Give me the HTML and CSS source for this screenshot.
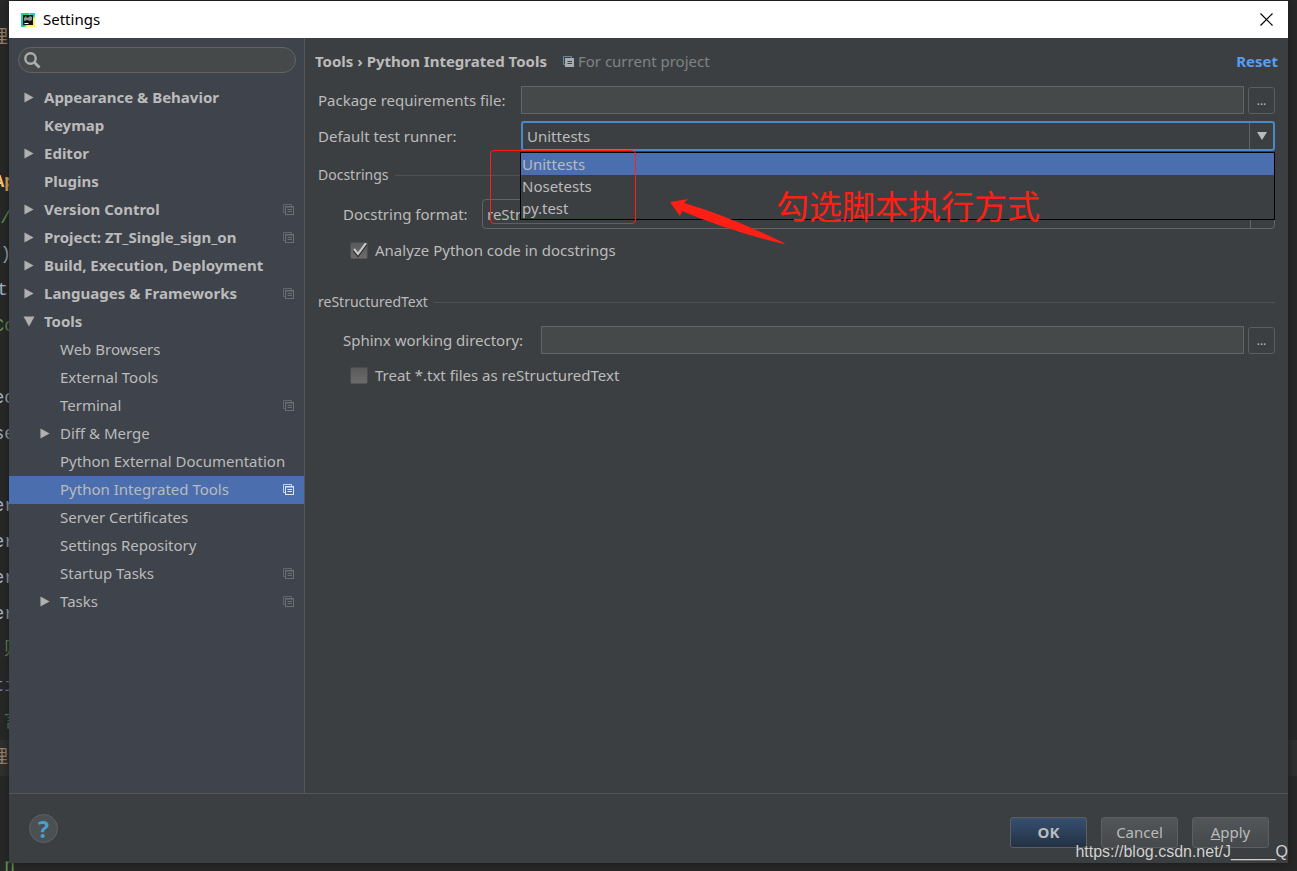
FILE: index.html
```html
<!DOCTYPE html>
<html lang="en">
<head>
<meta charset="utf-8">
<title>Settings</title>
<link rel="stylesheet" href="styles.css">
</head>
<body>
<svg class="defs" width="0" height="0" aria-hidden="true">
  <symbol id="copy" viewBox="0 0 11 11">
    <path d="M2 8.500H.5V.5H8.500V2" fill="none" stroke="var(--back)"/>
    <rect x="2.500" y="2.500" width="8" height="8" fill="var(--fill, none)" stroke="var(--front)"/>
    <path d="M3 3.500H10" stroke="var(--front)" opacity=".5"/>
    <path d="M4.500 5.500H9M4.500 7.500H9" stroke="var(--lines, var(--front))"/>
  </symbol>
  <symbol id="right" viewBox="0 0 10 12"><path d="M0 .5 10 6 0 11.500z" fill="currentColor"/></symbol>
  <symbol id="down" viewBox="0 0 12 10"><path d="M.5 0h11L6 10z" fill="currentColor"/></symbol>
</svg>

<div class="editor" aria-hidden="true">
  <div class="code"></div>
  <div class="code orange">理</div>
  <div class="code"></div>
  <div class="code"></div>
  <div class="code"></div>
  <div class="code gold">Ap</div>
  <div class="code green narrow">//</div>
  <div class="code narrow">()</div>
  <div class="code thin">t</div>
  <div class="code green">Co</div>
  <div class="code"></div>
  <div class="code">ec</div>
  <div class="code">se</div>
  <div class="code"></div>
  <div class="code">er</div>
  <div class="code">er</div>
  <div class="code">er</div>
  <div class="code">er</div>
  <div class="code green wide">则</div>
  <div class="code blue">ti</div>
  <div class="code green wide">言</div>
  <div class="code orange current">理</div>
  <div class="code"></div>
  <div class="code"></div>
  <div class="code green">n</div>
</div>

<div class="dialog" role="dialog" aria-labelledby="dialog-title">
  <header class="titlebar">
    <svg class="app-icon" viewBox="0 0 14 14" aria-hidden="true">
      <rect width="14" height="14" fill="#21d789"/>
      <path d="M8 0h5v3l1 2v9H3l6-4z" fill="#fcf84a"/>
      <path d="M8 0h5v5l-3-2z" fill="#30bdf0"/>
      <path d="M0 6l5 6-2 2H0z" fill="#18c6a0"/>
      <rect x="2" y="2" width="10" height="10" fill="#111"/>
      <path d="M3 8V5l2-2 1 2 2-1 1-1 2 1v3L9 8 6 7z" fill="#8b9690"/>
      <path d="M3.500 10.500h4" stroke="#fff"/>
    </svg>
    <h1 class="title" id="dialog-title">Settings</h1>
    <button class="close" type="button" aria-label="Close">
      <svg width="13" height="13" viewBox="0 0 13 13"><path d="M.5.5l12 12M12.500.5l-12 12" stroke="#000" stroke-width="1.200"/></svg>
    </button>
  </header>

  <div class="content">
    <nav class="sidebar" aria-label="Settings sections">
      <div class="search">
        <svg width="17" height="17" viewBox="0 0 17 17" aria-hidden="true"><circle cx="6.500" cy="6.500" r="5.200" fill="none" stroke="#adadad" stroke-width="2.400"/><path d="M10.500 10.500l5 5" stroke="#adadad" stroke-width="2.800"/></svg>
        <input class="search-input" type="text" aria-label="Search settings">
      </div>
      <ul class="tree">
        <li class="item top"><svg class="arrow"><use href="#right"/></svg><span class="name">Appearance &amp; Behavior</span></li>
        <li class="item top"><span class="arrow"></span><span class="name">Keymap</span></li>
        <li class="item top"><svg class="arrow"><use href="#right"/></svg><span class="name">Editor</span></li>
        <li class="item top"><span class="arrow"></span><span class="name">Plugins</span></li>
        <li class="item top"><svg class="arrow"><use href="#right"/></svg><span class="name">Version Control</span><svg class="copy"><use href="#copy"/></svg></li>
        <li class="item top"><svg class="arrow"><use href="#right"/></svg><span class="name">Project: ZT_Single_sign_on</span><svg class="copy"><use href="#copy"/></svg></li>
        <li class="item top"><svg class="arrow"><use href="#right"/></svg><span class="name">Build, Execution, Deployment</span></li>
        <li class="item top"><svg class="arrow"><use href="#right"/></svg><span class="name">Languages &amp; Frameworks</span><svg class="copy"><use href="#copy"/></svg></li>
        <li class="item top"><svg class="arrow"><use href="#down"/></svg><span class="name">Tools</span></li>
        <li class="item sub"><span class="arrow"></span><span class="name">Web Browsers</span></li>
        <li class="item sub"><span class="arrow"></span><span class="name">External Tools</span></li>
        <li class="item sub"><span class="arrow"></span><span class="name">Terminal</span><svg class="copy"><use href="#copy"/></svg></li>
        <li class="item sub"><svg class="arrow"><use href="#right"/></svg><span class="name">Diff &amp; Merge</span></li>
        <li class="item sub"><span class="arrow"></span><span class="name">Python External Documentation</span></li>
        <li class="item sub selected" aria-current="page"><span class="arrow"></span><span class="name">Python Integrated Tools</span><svg class="copy"><use href="#copy"/></svg></li>
        <li class="item sub"><span class="arrow"></span><span class="name">Server Certificates</span></li>
        <li class="item sub"><span class="arrow"></span><span class="name">Settings Repository</span></li>
        <li class="item sub"><span class="arrow"></span><span class="name">Startup Tasks</span><svg class="copy"><use href="#copy"/></svg></li>
        <li class="item sub"><svg class="arrow"><use href="#right"/></svg><span class="name">Tasks</span><svg class="copy"><use href="#copy"/></svg></li>
      </ul>
    </nav>

    <main class="pane">
      <div class="pane-head">
        <h2 class="crumbs">Tools › Python Integrated Tools</h2>
        <svg class="copy scope-icon" aria-hidden="true"><use href="#copy"/></svg>
        <span class="scope">For current project</span>
        <a class="reset" href="#">Reset</a>
      </div>

      <form class="form">
        <div class="row">
          <label class="label wide" for="req">Package requirements file:</label>
          <input class="field" id="req" type="text">
          <button class="browse" type="button" aria-label="Browse">...</button>
        </div>
        <div class="row runner-row">
          <label class="label wide" for="runner">Default test runner:</label>
          <div class="combo focused">
            <select class="select" id="runner"><option>Unittests</option><option>Nosetests</option><option>py.test</option></select>
            <span class="combo-button"><svg width="10" height="8" viewBox="0 0 10 8"><path d="M0 0h10L5 8z" fill="#bbb"/></svg></span>
            <ul class="popup" role="listbox" aria-label="Default test runner">
              <li class="option chosen" role="option" aria-selected="true">Unittests</li>
              <li class="option" role="option">Nosetests</li>
              <li class="option" role="option">py.test</li>
            </ul>
          </div>
        </div>

        <h3 class="section">Docstrings</h3>
        <div class="row inset">
          <label class="label format" for="format">Docstring format:</label>
          <div class="combo">
            <select class="select" id="format"><option>reStructuredText</option></select>
            <span class="combo-button"></span>
          </div>
        </div>
        <label class="check"><input class="box" type="checkbox" checked>Analyze Python code in docstrings</label>

        <h3 class="section spaced">reStructuredText</h3>
        <div class="row inset sphinx">
          <label class="label dir" for="sphinx">Sphinx working directory:</label>
          <input class="field" id="sphinx" type="text">
          <button class="browse" type="button" aria-label="Browse">...</button>
        </div>
        <label class="check"><input class="box" type="checkbox">Treat *.txt files as reStructuredText</label>
      </form>

      <div class="mark-box"></div>
      <svg class="mark-arrow" width="116" height="48" viewBox="0 0 116 48" aria-hidden="true"><path d="M1 3 19 0 15 4 Q60 17 116 44.500L115 45Q60 32 13 12L11 17z" fill="#ff1f14"/></svg>
      <p class="mark-text" lang="zh">勾选脚本执行方式</p>
    </main>
  </div>

  <footer class="footer">
    <button class="help" type="button" aria-label="Help">?</button>
    <button class="btn primary" type="button">OK</button>
    <button class="btn" type="button">Cancel</button>
    <button class="btn" type="button"><u>A</u>pply</button>
  </footer>
  <p class="watermark">https://blog.csdn.net/J_____Q</p>
</div>
</body>
</html>
```

FILE: styles.css
```css
* { box-sizing: border-box; }

body {
  margin: 0;
  min-height: 100vh;
  padding: 1px 9px 8px;
  display: flex;
  position: relative;
  overflow: hidden;
  background: #282828;
  color: #bbb;
  font: 15px/20px "Noto Sans", "Open Sans", "Noto Sans CJK SC", sans-serif;
}

button, input, select { font: inherit; color: inherit; margin: 0; }
h1, h2, h3, p, ul { margin: 0; padding: 0; font: inherit; list-style: none; }
.defs { position: absolute; }

/* Editor visible behind the dialog */
.editor {
  position: absolute;
  inset: 0;
  margin-top: -16px;
  font: 18px/36px "Liberation Mono", "Noto Sans CJK SC", monospace;
  color: #a9b7c6;
}
.code { height: 36px; width: 15px; display: flex; justify-content: flex-end; white-space: nowrap; }
.code.orange { width: 8px; color: #a08468; }
.code.thin { width: 8px; }
.code.narrow { width: 11px; }
.code.wide { width: 22px; }
.code.gold { color: #ffc66d; font-weight: bold; }
.code.green { color: #629755; }
.code.blue { color: #8888c6; }
.code.current { width: 100%; padding-right: calc(100% - 8px); background: #303030; }

.dialog {
  flex: 1;
  min-width: 0;
  display: flex;
  flex-direction: column;
  position: relative;
  background: #3c3f41;
  box-shadow: 0 0 8px #1a1a1a;
}

.titlebar {
  height: 37px;
  display: flex;
  align-items: center;
  gap: 8px;
  padding: 0 15px 0 12px;
  background: #fff;
  color: #000;
}
.app-icon { width: 14px; height: 14px; }
.title { flex: 1; padding-bottom: 1px; }
.close { padding: 0; border: 0; background: none; display: flex; }

.content { flex: 1; display: flex; }

.sidebar {
  width: 296px;
  padding-top: 9px;
  background: #3f434b;
  border-right: 1px solid #555;
}
.search {
  height: 26px;
  margin: 0 8px 11px 9px;
  padding-left: 5px;
  display: flex;
  align-items: center;
  border: 1px solid #646464;
  border-radius: 13px;
  background: #45494a;
}
.search-input { flex: 1; min-width: 0; border: 0; background: none; outline: 0; }

.item {
  height: 28px;
  display: flex;
  align-items: center;
  gap: 8px;
  padding: 0 10px 2px 14px;
  white-space: nowrap;
  --back: #5f6770;
  --front: #6b6f74;
}
.item.top { font-weight: bold; }
.item.sub { padding-left: 30px; }
.item.selected { background: #4b6eaf; --back: #b4d8ef; --front: #e0e4ea; }
.arrow { width: 12px; height: 11px; flex: none; color: #b0b0b0; }
.item .name { flex: 1; padding-left: 1px; }
.copy { width: 11px; height: 11px; flex: none; }

.pane { flex: 1; min-width: 0; position: relative; }
.pane-head {
  height: 48px;
  padding: 0 10px 2px;
  display: flex;
  align-items: center;
}
.crumbs { font-weight: bold; }
.scope-icon { margin: 0 4px 0 16px; --back: #5d8ca5; --front: #a8acae; --fill: #a8acae; --lines: #3c3f41; }
.scope { flex: 1; color: #808385; }
.reset { color: #589df6; font-weight: bold; text-decoration: none; }

.form { padding: 0 13px; }
.row { display: flex; align-items: center; }
.row.inset { padding-left: 25px; }
.label { flex: none; }
.label.wide { width: 203px; }
.label.format { width: 139px; }
.label.dir { width: 198px; }
.field {
  flex: 1;
  min-width: 0;
  height: 28px;
  padding: 0 6px;
  border: 1px solid #646464;
  background: #45494a;
  outline: 0;
}
.browse {
  width: 27px;
  height: 27px;
  margin: 1px 0 0 4px;
  padding: 0;
  border: 1px solid #5c5f60;
  border-radius: 3px;
  background: none;
  font-size: 12px;
}
.runner-row { padding-top: 7px; }
.combo { flex: 1; display: flex; position: relative; height: 30px; border: 1px solid #646464; border-radius: 4px; }
.combo.focused { border: 2px solid #4a88c7; border-radius: 3px; }
.select { flex: 1; min-width: 0; appearance: none; border: 0; padding: 0 4px; background: none; outline: 0; }
.combo-button {
  width: 24px;
  margin-left: -1px;
  display: flex;
  align-items: center;
  justify-content: center;
  border-left: 1px solid #646464;
  pointer-events: none;
}
.popup {
  position: absolute;
  z-index: 1;
  top: 29px;
  left: -3px;
  right: -2px;
  border: 1px solid #000;
  background: #3c3f41;
}
.option { height: 22px; line-height: 22px; padding-left: 1px; }
.option.chosen { background: #4b6eaf; }

.section { display: flex; align-items: center; gap: 6px; height: 48px; font-size: 14px; }
.section::after { content: ""; flex: 1; height: 1px; background: #515151; }
.section.spaced { height: 24px; margin-top: 24px; }
.sphinx { margin: 12px 0 5px; }

.check { display: flex; align-items: center; gap: 7px; height: 32px; margin: 5px 0 0 32px; }
.box {
  appearance: none;
  width: 18px;
  height: 17px;
  border: 1px solid #4a4c4d;
  border-bottom-color: #555;
  border-radius: 2px;
  background: linear-gradient(#5a5a5a, #6b6b6b);
}
.box:checked {
  background: url("data:image/svg+xml,%3Csvg xmlns='http://www.w3.org/2000/svg' viewBox='0 0 16 15'%3E%3Cpath d='M3 7l4 5L15 1' fill='none' stroke='%23222' stroke-width='3'/%3E%3Cpath d='M3 6l4 5L15 0' fill='none' stroke='%23c8c8c8' stroke-width='2.200'/%3E%3C/svg%3E"), linear-gradient(#5a5a5a, #6b6b6b);
}

/* Red annotations laid over the pane */
.mark-box {
  position: absolute;
  z-index: 2;
  left: 185px;
  top: 112px;
  width: 146px;
  height: 74px;
  border: 1px solid #ff1f14;
  border-radius: 4px;
}
.mark-arrow { position: absolute; z-index: 2; left: 364px; top: 161px; }
.mark-text {
  position: absolute;
  z-index: 2;
  left: 471px;
  top: 147px;
  font: 33px/40px "Noto Sans CJK SC", sans-serif;
  color: #ff1f14;
}

.footer {
  display: flex;
  align-items: center;
  gap: 14px;
  height: 70px;
  padding: 7px 19px 0 20px;
  border-top: 1px solid #555;
}
.help {
  width: 29px;
  height: 29px;
  margin: 0 auto 7px 0;
  padding: 0;
  border: 1px solid #5e6263;
  border-radius: 50%;
  background: #4b5052;
  color: #4a9ed0;
  font: bold 23px/26px "Open Sans", sans-serif;
}
.btn {
  width: 77px;
  height: 31px;
  padding: 0;
  border: 1px solid #5b5f61;
  border-radius: 3px;
  background: linear-gradient(#525658, #45494b);
}
.btn.primary { background: linear-gradient(#365070, #233143); font-weight: bold; }

.watermark {
  position: absolute;
  right: 0;
  bottom: 1px;
  font: 16px/20px "Liberation Sans", Arial, sans-serif;
  color: #d2d2d2;
  text-shadow: 0 0 1px #333;
}
```
